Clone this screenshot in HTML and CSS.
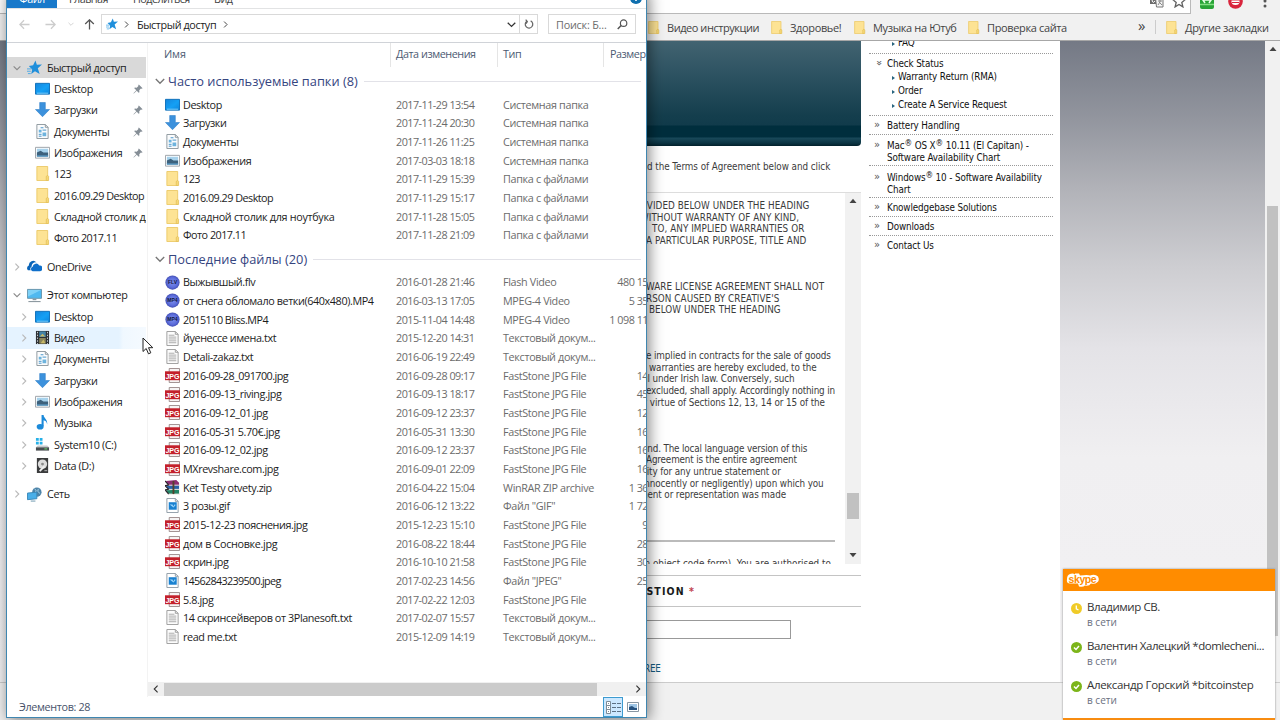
FILE: index.html
```html
<!DOCTYPE html>
<html lang="ru">
<head>
<meta charset="utf-8">
<title>Быстрый доступ</title>
<link rel="stylesheet" href="styles.css">
</head>
<body>
<svg class="defs" aria-hidden="true">
<linearGradient id="gd" x2="1" y2="1"><stop offset="0" stop-color="#1585dc"/><stop offset=".55" stop-color="#14a0f5"/><stop offset="1" stop-color="#0e86dd"/></linearGradient>
<radialGradient id="gm"><stop offset="0" stop-color="#7f90ec"/><stop offset=".7" stop-color="#5b6cdb"/><stop offset="1" stop-color="#4450b4"/></radialGradient>
<symbol id="desk" viewBox="0 0 16 16"><path d="M.500 2.500h15v11.500H.500z" fill="url(#gd)" stroke="#0b6db8"/><path d="M2 13h12" stroke="#7fd0fb"/></symbol>
<symbol id="down" viewBox="0 0 16 16"><path d="M5 .500h6v7.500H15.500L8 15.700.500 8H5z" fill="#3c91dc" stroke="#2f7fc8" stroke-width=".6"/></symbol>
<symbol id="doc" viewBox="0 0 16 16"><path d="M2 .500h9l3 3v12H2z" fill="#fbfcfd" stroke="#8b959c"/><path d="M11 .500v3h3" fill="none" stroke="#8b959c"/><path d="M4 6h3v3H4zM8 9h4v4H8z" fill="#6db3dd"/><path d="M6 4h3M8 6.500h4M4 11h3M4 13h3" stroke="#3d8fc7"/></symbol>
<symbol id="pic" viewBox="0 0 16 16"><path d="M.500 2.500h15v11.500H.500z" fill="#fff" stroke="#9ba1a6"/><path d="M2 4h12v8.500H2z" fill="#a7d2ec"/><path d="M2 8l4-2 3 2h5v4H2z" fill="#3d617c"/><path d="M2 11h12v1.500H2z" fill="#5794bd"/></symbol>
<symbol id="fold" viewBox="0 0 16 16"><path d="M2 .500h11.500v15H2z" fill="#fde394" stroke="#ecca6a"/><path d="M12 15.500v-4.500l1.500-1 1 1v4.500z" fill="#f6d878" stroke="#e2be55" stroke-width=".8"/></symbol>
<symbol id="star" viewBox="0 0 16 16"><path d="M9 .500l1.500 4.500 5.500-.300-4.500 4L13.500 15l-5-3-4 3 1-5L2 6.500l4.500-.800z" fill="#1f8fdb"/><path d="M0 9.500h5M0 12h4M1 14.500h3" stroke="#4aa9e6"/></symbol>
<symbol id="cloud" viewBox="0 0 16 16"><path d="M1 12a3 3 0 0 1 1-5 4.500 4.500 0 0 1 8-3.300A4 4 0 0 0 5 8 3 3 0 0 0 4 12z" fill="#0a64b8"/><path d="M6 13a2.500 2.500 0 0 1 0-4.800A3.700 3.700 0 0 1 13 7a3 3 0 0 1 1 6z" fill="#0f6fca"/></symbol>
<symbol id="pc" viewBox="0 0 16 16"><path d="M.500 1.500h15v9.500H.500z" fill="#50b9f0" stroke="#6894ab"/><path d="M1 2h14L1 9z" fill="#7fd1f7"/><path d="M6 11.500h4V13H6z" fill="#8b9aa3"/><path d="M1.500 14.500h13" stroke="#7a8890"/></symbol>
<symbol id="vid" viewBox="0 0 16 16"><path d="M1 1h14v14H1z" fill="#2d3135"/><path d="M4.500 1.500h7v6h-7z" fill="#4383a7"/><path d="M4.500 8.500h7v6h-7z" fill="#8a855c"/><path d="M2.700 2v13M13.300 2v13" stroke="#dbe0e3" stroke-dasharray="1.500 1.500"/><path d="M5 7l3-3 3 3M6 14l3-4 2 4" fill="#c6b867"/></symbol>
<symbol id="mus" viewBox="0 0 16 16"><ellipse cx="5.500" cy="12.500" rx="3.700" ry="3" fill="#1b8ada"/><path d="M7 0h2.200c0 3.500 4.500 4.500 3.800 10-.700-3.500-2-4-3.800-4.500V12H7z" fill="#1b8ada"/></symbol>
<symbol id="drv" viewBox="0 0 16 16"><path d="M1 1h3v3H1zM5 1h3v3H5zM1 5h3v3H1zM5 5h3v3H5z" fill="#25b0e8"/><path d="M3 9h10l2 2H1z" fill="#c4c8ca"/><path d="M1 11h14v3.500H1z" fill="#484d50"/><path d="M10 12.700h3" stroke="#6be36b"/></symbol>
<symbol id="hdd" viewBox="0 0 16 16"><path d="M2 0h12v16H2z" fill="#3b3c3d"/><circle cx="8" cy="6.500" r="5" fill="#dcdcdc"/><circle cx="8" cy="6.500" r="1.500" fill="#8a8a8a"/><path d="M5 14l5-5" stroke="#f0f0f0" stroke-width="2"/><path d="M10 13.500h3" stroke="#bbb"/></symbol>
<symbol id="net" viewBox="0 0 16 16"><circle cx="10.500" cy="5.500" r="5" fill="#4d83a8"/><path d="M8 2q3 1 1 4M12 2q-2 3 2 5" stroke="#a9d3ea" fill="none"/><path d="M.500 6.500l10-1v7l-10 1z" fill="#49aee8" stroke="#3a88b8"/><path d="M4 15h5" stroke="#6894ab"/></symbol>
<symbol id="txt" viewBox="0 0 16 16"><path d="M2 .500h9l3 3v12H2z" fill="#fcfcfc" stroke="#9b9b9b"/><path d="M11 .500v3h3" fill="none" stroke="#9b9b9b"/><path d="M4 4.500h6M4 6.500h8M4 8.500h8M4 10.500h8M4 12.500h8" stroke="#a8a8a8"/></symbol>
<symbol id="jpg" viewBox="0 0 16 16"><path d="M4.500.500h11v15h-11z" fill="#f6f3f3" stroke="#9b8a8a"/><path d="M0 3.500h16v9.500H0z" fill="#c3202a"/><text x="8" y="11.200" text-anchor="middle" class="ic jt">JPG</text></symbol>
<symbol id="img" viewBox="0 0 16 16"><path d="M2 .500h9l3 3v12H2z" fill="#fff" stroke="#8e9ba5"/><path d="M11 .500v3h3" fill="none" stroke="#8e9ba5"/><path d="M4 4.500h8.500v8H4z" fill="#1a81d0"/><path d="M5 7h3l1 2 1-2h1v1L9 10z" fill="#9ad6fb"/></symbol>
<symbol id="zip" viewBox="0 0 16 16"><path d="M1 1l11-1 3 3v3H4z" fill="#8e2c72"/><path d="M1 6l14-.500V10H4z" fill="#2862a8"/><path d="M1 11l14-.500V15H4z" fill="#228565"/><path d="M0 1l4 4.500L0 6l4 4-4 .500L4 15" fill="none" stroke="#27232b" stroke-width="1.300"/><path d="M4 5.500h11M4 10h11M4 15h12" stroke="#e8e4de"/><path d="M8 1h2v14H8z" fill="#55412d"/></symbol>
<symbol id="flv" viewBox="0 0 16 16"><circle cx="8" cy="8" r="7.600" fill="url(#gm)"/><text x="8" y="10" text-anchor="middle" class="ic mt">FLV</text></symbol>
<symbol id="mp4" viewBox="0 0 16 16"><circle cx="8" cy="8" r="7.600" fill="url(#gm)"/><text x="8" y="10" text-anchor="middle" class="ic mt">MP4</text></symbol>
<symbol id="pin" viewBox="0 0 12 12"><path d="M7 .500l4.500 4.500-1 .700-1-.200-2 2 .200 2.300-.900.700L4.500 8 1 11.500.500 11 4 7.500 1.500 5.200l.700-.900 2.300.200 2-2L6.300 1.500z" fill="#858e96"/></symbol>
<symbol id="cr" viewBox="0 0 10 10"><path d="M3 .800L7.200 5 3 9.200" fill="none" stroke="currentColor" class="chev"/></symbol>
<symbol id="cd" viewBox="0 0 10 10"><path d="M.800 3L5 7.200 9.200 3" fill="none" stroke="currentColor" class="chev"/></symbol>
<symbol id="arr" viewBox="0 0 12 12"><path d="M11.500 6H1M5.500 1.300L.900 6l4.600 4.700" fill="none" stroke="currentColor" class="chev"/></symbol>
<symbol id="tri" viewBox="0 0 8 6"><path d="M4 .800L7.500 5h-7z" fill="#444"/></symbol>
</svg>

<div class="browser">
  <div class="toolbar">
    <div class="omni">
      <svg width="14" height="14" viewBox="0 0 14 14"><path d="M0 0h8v10H0z" fill="#6b6b6b"/><path d="M5.500 4h7.500v9H6.500z" fill="#f4f4f4" stroke="#777"/><path d="M2 5h4M8 7h4M10 6v2l-2 3M9 8l3 3" stroke="#888" fill="none"/><path d="M2 7q0-3 3-2M5 7q-2 3-3 0" stroke="#fff" fill="none"/></svg>
      <svg width="14" height="14" viewBox="0 0 14 14"><path d="M7 1l1.700 4.200 4.600.300-3.500 3 1.100 4.400L7 10.500l-3.900 2.400 1.100-4.400-3.500-3 4.600-.300z" fill="none" stroke="#606060" stroke-width="1.300"/></svg>
    </div>
    <svg class="ext1" width="14" height="16" viewBox="0 0 14 16"><rect width="14" height="16" rx="2" fill="#28a336"/><path d="M3 2v5h8V2M3 7l2 3M11 7l-2 3" stroke="#e8ffe8" stroke-width="1.500" fill="none"/><path d="M0 11.500h14" stroke="#80e080" stroke-width="1.500"/></svg>
    <svg class="ext2" width="15" height="15" viewBox="0 0 15 15"><circle cx="7.500" cy="7.500" r="7.300" fill="#d9243c"/><path d="M3.500 6.500h8v1q0 3.500-4 3.500t-4-3.500z" fill="#fff"/><path d="M4 8.500h7" stroke="#d9243c"/></svg>
    <svg class="ext3" width="4" height="14" viewBox="0 0 4 14"><circle cx="2" cy="2" r="1.500" fill="#555"/><circle cx="2" cy="7" r="1.500" fill="#555"/><circle cx="2" cy="12" r="1.500" fill="#555"/></svg>
  </div>
  <div class="bookmarks">
    <span class="bm b1"><svg><use href="#fold"/></svg>Видео инструкции</span>
    <span class="bm b2"><svg><use href="#fold"/></svg>Здоровье!</span>
    <span class="bm b3"><svg><use href="#fold"/></svg>Музыка на Ютуб</span>
    <span class="bm b4"><svg><use href="#fold"/></svg>Проверка сайта</span>
    <span class="more">»</span>
    <span class="bm b5"><svg><use href="#fold"/></svg>Другие закладки</span>
  </div>
  <div class="page">
    <div class="gutter"></div>
    <div class="site">
      <div class="article">
        <div class="hero"></div>
        <p class="intro">d the Terms of Agreement below and click</p>
        <div class="licence">
          <div class="ltext">
            <p class="s1 caps">OVIDED BELOW UNDER THE HEADING</p><p class="s1 caps">WITHOUT WARRANTY OF ANY KIND,</p><p class="s4 caps">TO, ANY IMPLIED WARRANTIES OR</p><p class="s2 caps">A PARTICULAR PURPOSE, TITLE AND</p><p></p><p></p><p></p>
            <p class="s3 caps">WARE LICENSE AGREEMENT SHALL NOT</p><p class="s2 caps">RSON CAUSED BY CREATIVE'S</p><p class="s5 caps">BELOW UNDER THE HEADING</p><p></p><p></p><p></p>
            <p class="s2">e implied in contracts for the sale of goods</p><p class="s5">warranties are hereby excluded, to the</p><p class="s6">ul under Irish law. Conversely, such</p><p class="s2 tight">excluded, shall apply. Accordingly nothing in</p><p class="s6">y virtue of Sections 12, 13, 14 or 15 of the</p><p></p><p></p><p></p>
            <p class="s8 tight">and. The local language version of this</p><p class="s2 tight">Agreement is the entire agreement</p><p class="s8">ility for any untrue statement or</p><p class="s7">innocently or negligently) upon which you</p><p class="s9">ment or representation was made</p><p></p><p></p><p></p><p class="rule"></p><p></p>
            <p class="s6 form">in object code form). You are authorised to</p>
          </div>
          <div class="sb"><svg><use href="#tri"/></svg><i></i><svg class="flip"><use href="#tri"/></svg></div>
        </div>
        <div class="question">QUESTION <b>*</b></div>
        <div class="answer"></div>
        <a class="agree">AGREE</a>
      </div>
      <div class="menu">
        <div class="mi faq"><span class="sub">FAQ</span></div>
        <div class="mi check"><span class="top"><em class="dn">»</em>Check Status</span><span class="sub">Warranty Return (RMA)</span><span class="sub o">Order</span><span class="sub o">Create A Service Request</span></div>
        <div class="mi h19"><span class="top"><em>»</em>Battery Handling</span></div>
        <div class="mi h31"><span class="top"><em>»</em><span>Mac<sup>®</sup> OS X<sup>®</sup> 10.11 (El Capitan) -<br>Software Availability Chart</span></span></div>
        <div class="mi h32"><span class="top"><em>»</em><span>Windows<sup>®</sup> 10 - Software Availability<br>Chart</span></span></div>
        <div class="mi h19"><span class="top"><em>»</em>Knowledgebase Solutions</span></div>
        <div class="mi h19"><span class="top"><em>»</em>Downloads</span></div>
        <div class="mi h19 last"><span class="top"><em>»</em>Contact Us</span></div>
      </div>
    </div>
    <div class="gutter wide"></div>
    <div class="psb"><svg><use href="#tri"/></svg><i></i></div>
  </div>
  <div class="footer"></div>
</div>

<div class="skype">
  <div class="shead"><svg width="34" height="16" viewBox="0 0 34 16"><path d="M4 1q3-1 5 .500V.500h4l1 2q8-1 10 0 5-2 8 1 2 4-1 6-2 2-6 1-2 3-6 2-2 2-6 1l-1-3H5Q0 11 1 6q0-4 3-5z" fill="#fff"/><text x="2.500" y="9.500" class="sk">skype</text></svg></div>
  <div class="sbody">
    <div class="ct"><svg viewBox="0 0 11 11"><circle cx="5.500" cy="5.500" r="5.500" fill="#f0cb27"/><path d="M5.300 2.500v3.300l2.200 1.200" stroke="#fff" stroke-width="1.300" fill="none"/></svg><div><p>Владимир СВ.</p><small>в сети</small></div></div>
    <div class="ct"><svg viewBox="0 0 11 11"><circle cx="5.500" cy="5.500" r="5.500" fill="#7cb51a"/><path d="M3 5.500l2 2 3-3.500" stroke="#fff" stroke-width="1.500" fill="none"/></svg><div><p class="t2c">Валентин Халецкий *domlecheni...</p><small>в сети</small></div></div>
    <div class="ct"><svg viewBox="0 0 11 11"><circle cx="5.500" cy="5.500" r="5.500" fill="#7cb51a"/><path d="M3 5.500l2 2 3-3.500" stroke="#fff" stroke-width="1.500" fill="none"/></svg><div><p class="t3">Александр Горский *bitcoinstep</p><small>в сети</small></div></div>
  </div>
</div>

<div class="win">
  <div class="tabs"><span class="file">Файл</span><span class="tb t1">Главная</span><span class="tb t2">Поделиться</span><span class="tb t4">Вид</span><svg class="help" viewBox="0 0 12 12"><circle cx="6" cy="6" r="6" fill="#0f6fae"/><path d="M6 5v4" stroke="#fff" stroke-width="1.600"/></svg></div>
  <div class="nav">
    <svg class="a1"><use href="#arr"/></svg><svg class="a2"><use href="#arr"/></svg><svg class="a3"><use href="#cd"/></svg><svg class="a4"><use href="#arr"/></svg>
    <div class="addr"><svg class="st"><use href="#star"/></svg><svg class="c"><use href="#cr"/></svg><span>Быстрый доступ</span><svg class="c"><use href="#cr"/></svg><svg class="drop"><use href="#cd"/></svg><div class="ref"><svg viewBox="0 0 12 12"><path d="M8 2.300a4.500 4.500 0 1 1-4.500.300M2 .700l2 2.300-1.500 2.500" fill="none" stroke="#666" stroke-width="1.500"/></svg></div></div>
    <div class="search"><span>Поиск: Б...</span><svg viewBox="0 0 12 12"><circle cx="7.200" cy="4.500" r="3.500" fill="none" stroke="#555" stroke-width="1.300"/><path d="M4.500 7L.800 11" stroke="#555" stroke-width="1.600"/></svg></div>
  </div>
  <div class="body">
    <div class="tree">
      <div class="n root sel"><svg class="e d"><use href="#cd"/></svg><svg class="i"><use href="#star"/></svg><span>Быстрый доступ</span></div>
      <div class="n"><svg class="e"></svg><svg class="i"><use href="#desk"/></svg><span>Desktop</span><svg class="p"><use href="#pin"/></svg></div>
      <div class="n"><svg class="e"></svg><svg class="i"><use href="#down"/></svg><span>Загрузки</span><svg class="p"><use href="#pin"/></svg></div>
      <div class="n"><svg class="e"></svg><svg class="i"><use href="#doc"/></svg><span>Документы</span><svg class="p"><use href="#pin"/></svg></div>
      <div class="n"><svg class="e"></svg><svg class="i"><use href="#pic"/></svg><span>Изображения</span><svg class="p"><use href="#pin"/></svg></div>
      <div class="n"><svg class="e"></svg><svg class="i"><use href="#fold"/></svg><span>123</span></div>
      <div class="n"><svg class="e"></svg><svg class="i"><use href="#fold"/></svg><span class="num">2016.09.29 Desktop</span></div>
      <div class="n"><svg class="e"></svg><svg class="i"><use href="#fold"/></svg><span>Складной столик для ноутбука</span></div>
      <div class="n"><svg class="e"></svg><svg class="i"><use href="#fold"/></svg><span class="num">Фото 2017.11</span></div>
      <div class="n root gap"><svg class="e"><use href="#cr"/></svg><svg class="i"><use href="#cloud"/></svg><span>OneDrive</span></div>
      <div class="n root gap"><svg class="e d"><use href="#cd"/></svg><svg class="i"><use href="#pc"/></svg><span>Этот компьютер</span></div>
      <div class="n"><svg class="e"><use href="#cr"/></svg><svg class="i"><use href="#desk"/></svg><span>Desktop</span></div>
      <div class="n hov"><svg class="e"><use href="#cr"/></svg><svg class="i"><use href="#vid"/></svg><span>Видео</span></div>
      <div class="n"><svg class="e"><use href="#cr"/></svg><svg class="i"><use href="#doc"/></svg><span>Документы</span></div>
      <div class="n"><svg class="e"><use href="#cr"/></svg><svg class="i"><use href="#down"/></svg><span>Загрузки</span></div>
      <div class="n"><svg class="e"><use href="#cr"/></svg><svg class="i"><use href="#pic"/></svg><span>Изображения</span></div>
      <div class="n"><svg class="e"><use href="#cr"/></svg><svg class="i"><use href="#mus"/></svg><span>Музыка</span></div>
      <div class="n"><svg class="e"><use href="#cr"/></svg><svg class="i"><use href="#drv"/></svg><span>System10 (C:)</span></div>
      <div class="n"><svg class="e"><use href="#cr"/></svg><svg class="i"><use href="#hdd"/></svg><span>Data (D:)</span></div>
      <div class="n root gap"><svg class="e"><use href="#cr"/></svg><svg class="i"><use href="#net"/></svg><span>Сеть</span></div>
    </div>
    <div class="list">
      <div class="head"><span>Имя</span><span>Дата изменения</span><span>Тип</span><span>Размер</span></div>
      <div class="grp"><svg><use href="#cd"/></svg><span>Часто используемые папки (8)</span><i></i></div>
      <div class="r"><svg><use href="#desk"/></svg><b>Desktop</b><span>2017-11-29 13:54</span><span>Системная папка</span></div>
      <div class="r"><svg><use href="#down"/></svg><b>Загрузки</b><span>2017-11-24 20:30</span><span>Системная папка</span></div>
      <div class="r"><svg><use href="#doc"/></svg><b>Документы</b><span>2017-11-26 11:25</span><span>Системная папка</span></div>
      <div class="r"><svg><use href="#pic"/></svg><b>Изображения</b><span>2017-03-03 18:18</span><span>Системная папка</span></div>
      <div class="r"><svg><use href="#fold"/></svg><b class="num">123</b><span>2017-11-29 15:39</span><span>Папка с файлами</span></div>
      <div class="r"><svg><use href="#fold"/></svg><b class="num">2016.09.29 Desktop</b><span>2017-11-29 15:17</span><span>Папка с файлами</span></div>
      <div class="r"><svg><use href="#fold"/></svg><b class="loose">Складной столик для ноутбука</b><span>2017-11-28 15:05</span><span>Папка с файлами</span></div>
      <div class="r"><svg><use href="#fold"/></svg><b class="num">Фото 2017.11</b><span>2017-11-28 21:09</span><span>Папка с файлами</span></div>
      <div class="grp"><svg><use href="#cd"/></svg><span>Последние файлы (20)</span><i></i></div>
      <div class="r"><svg><use href="#flv"/></svg><b>Выжывшый.flv</b><span>2016-01-28 21:46</span><span>Flash Video</span><u>480 15</u></div>
      <div class="r"><svg><use href="#mp4"/></svg><b>от снега обломало ветки(640x480).MP4</b><span>2016-03-13 17:05</span><span>MPEG-4 Video</span><u>5 35</u></div>
      <div class="r"><svg><use href="#mp4"/></svg><b class="num">2015110 Bliss.MP4</b><span>2015-11-04 14:48</span><span>MPEG-4 Video</span><u>1 098 11</u></div>
      <div class="r"><svg><use href="#txt"/></svg><b>йуенессе имена.txt</b><span>2015-12-20 14:31</span><span>Текстовый докум...</span></div>
      <div class="r"><svg><use href="#txt"/></svg><b>Detali-zakaz.txt</b><span>2016-06-19 22:49</span><span>Текстовый докум...</span></div>
      <div class="r"><svg><use href="#jpg"/></svg><b class="num">2016-09-28_091700.jpg</b><span>2016-09-28 09:17</span><span>FastStone JPG File</span><u>14</u></div>
      <div class="r"><svg><use href="#jpg"/></svg><b>2016-09-13_riving.jpg</b><span>2016-09-13 18:17</span><span>FastStone JPG File</span><u>45</u></div>
      <div class="r"><svg><use href="#jpg"/></svg><b>2016-09-12_01.jpg</b><span>2016-09-12 23:37</span><span>FastStone JPG File</span><u>12</u></div>
      <div class="r"><svg><use href="#jpg"/></svg><b>2016-05-31 5.70€.jpg</b><span>2016-05-31 13:30</span><span>FastStone JPG File</span><u>16</u></div>
      <div class="r"><svg><use href="#jpg"/></svg><b>2016-09-12_02.jpg</b><span>2016-09-12 23:37</span><span>FastStone JPG File</span><u>16</u></div>
      <div class="r"><svg><use href="#jpg"/></svg><b>MXrevshare.com.jpg</b><span>2016-09-01 22:09</span><span>FastStone JPG File</span><u>16</u></div>
      <div class="r"><svg><use href="#zip"/></svg><b>Ket Testy otvety.zip</b><span>2016-04-22 15:04</span><span>WinRAR ZIP archive</span><u>1 36</u></div>
      <div class="r"><svg><use href="#img"/></svg><b>3 розы.gif</b><span>2016-06-12 13:22</span><span>Файл "GIF"</span><u>1 72</u></div>
      <div class="r"><svg><use href="#jpg"/></svg><b>2015-12-23 пояснения.jpg</b><span>2015-12-23 15:10</span><span>FastStone JPG File</span><u>9</u></div>
      <div class="r"><svg><use href="#jpg"/></svg><b class="loose">дом в Сосновке.jpg</b><span>2016-08-22 18:44</span><span>FastStone JPG File</span><u>28</u></div>
      <div class="r"><svg><use href="#jpg"/></svg><b>скрин.jpg</b><span>2016-10-10 21:58</span><span>FastStone JPG File</span><u>30</u></div>
      <div class="r"><svg><use href="#img"/></svg><b class="num2">14562843239500.jpeg</b><span>2017-02-23 14:56</span><span>Файл "JPEG"</span><u>25</u></div>
      <div class="r"><svg><use href="#jpg"/></svg><b>5.8.jpg</b><span>2017-02-22 12:03</span><span>FastStone JPG File</span></div>
      <div class="r"><svg><use href="#txt"/></svg><b>14 скринсейверов от 3Planesoft.txt</b><span>2017-02-07 15:57</span><span>Текстовый докум...</span></div>
      <div class="r"><svg><use href="#txt"/></svg><b>read me.txt</b><span>2015-12-09 14:19</span><span>Текстовый докум...</span></div>
      <div class="hsb"><svg class="l"><use href="#cr"/></svg><i></i><svg><use href="#cr"/></svg></div>
    </div>
  </div>
  <div class="status"><span>Элементов: 28</span>
    <div class="v on"><svg width="15" height="13" viewBox="0 0 15 13"><path d="M.500.500h4v12h-4z" fill="#fff" stroke="#7d8c98"/><path d="M1 4.500h3M1 8.500h3M2 2.500h1M2 6.500h1M2 10.500h1" stroke="#7d8c98"/><path d="M6 2.500h4M11 2.500h4M6 6.500h4M11 6.500h4M6 10.500h4M11 10.500h4" stroke="#5c7185"/></svg></div>
    <div class="v"><svg width="12" height="10" viewBox="0 0 12 10"><path d="M.500.500h11v9H.500z" fill="#fff" stroke="#8997a3"/><path d="M2 2h8v6H2z" fill="#9fc6e6"/><path d="M2 5l3-1 3 2h2v2H2z" fill="#27527f"/></svg></div>
  </div>
</div>
<svg class="cursor" width="12" height="18" viewBox="0 0 12 18"><path d="M1 1v13.500l3.200-3 2.300 5.300 2.300-1-2.300-5.100h4.300z" fill="#fff" stroke="#222"/></svg>
</body>
</html>
```
FILE: styles.css
```css
* { box-sizing: border-box; }
html, body { margin: 0; width: 1280px; height: 720px; overflow: hidden; }
body { background: #f1f1f1; font-family: "Open Sans", "Noto Sans", sans-serif; font-size: 10.8px; color: #1c1c1c; position: relative; }
p { margin: 0; }
svg { flex: none; display: block; }
.defs { position: absolute; width: 0; height: 0; }
.chev { stroke-width: 1.4px; }
.ic { font-family: "Liberation Sans", sans-serif; font-weight: bold; letter-spacing: 0; }
.jt { font-size: 7.6px; fill: #fff; }
.mt { font-size: 5.4px; fill: #10163f; }

/* browser behind */
.browser { width: 1280px; height: 720px; display: flex; flex-direction: column; }
.toolbar { height: 14px; display: flex; align-items: flex-start; background: #f1f1f1; }
.omni { width: 1191px; height: 14px; background: #fff; border: solid #b9b9b9; border-width: 0 1px 1px 0; display: flex; justify-content: flex-end; padding-right: 4px; gap: 8px; }
.omni svg { margin-top: -6px; }
.ext1 { margin: -7px 0 0 9px; }
.ext2 { margin: -6px 0 0 14px; }
.ext3 { margin: -6px 0 0 20px; }
.bookmarks { height: 27px; border-bottom: 1px solid #a7a7a7; background: #f1f1f1; display: flex; align-items: center; padding-left: 647px; color: #444; }
.bm { display: flex; align-items: center; gap: 7px; white-space: nowrap; font-size: 11px; letter-spacing: -.36px; }
.bm svg { width: 13px; height: 13px; }
.b1 { width: 123px; letter-spacing: -.45px; } .b2 { width: 83px; } .b3 { width: 114px; } .b4 { width: 171px; }
.more { width: 17px; font-size: 15px; line-height: 12px; margin-top: -4px; }
.b5 { border-left: 1px solid #ccc; height: 14px; padding-left: 9px; }
.page { height: 641px; display: flex; background: #fff; }
.gutter { width: 7px; background: linear-gradient(#747985, #92959e 12%, #b1b2b8 23%, #cdcdd1 35%, #e4e3e7 48%, #f0eff1 65%, #f2f1f3); }
.wide { width: 205px; }
.site { width: 1053px; display: flex; padding-left: 633px; }
.psb { width: 15px; background: #f1f1f1; display: flex; flex-direction: column; align-items: center; padding-top: 5px; }
.psb svg, .sb svg { width: 8px; height: 6px; }
.psb i { width: 11px; height: 430px; background: #c1c1c1; margin-top: 154px; }
.footer { flex: 1; border-top: 1px solid #ccc; background: #f1f1f1; }

.article { width: 221px; font-family: "DejaVu Sans Condensed", "DejaVu Sans", sans-serif; font-stretch: condensed; font-size: 9.8px; color: #3c3c3c; letter-spacing: -.1px; white-space: nowrap; }
.hero { height: 105px; border-radius: 0 0 4px 4px; background: linear-gradient(#426371, #2b5160 35%, #143e4d 75px, #113b4b 84px, #002e3d 85px, #002e3d 96px, #19495a 97px, #0b3443 102px, #02202b); }
.intro { padding-left: 7px; line-height: 12px; margin-top: 15px; letter-spacing: -.05px; }
.licence { height: 372px; margin-top: 19px; border-top: 1px solid #ddd; display: flex; overflow: hidden; }
.ltext { width: 205px; padding-top: 7px; overflow: hidden; }
.ltext p { height: 11.57px; line-height: 11.57px; }
.ltext .rule { height: 2px; background: #bbb; margin: 5px 10px 4.570px 0; }
.ltext .form { letter-spacing: .02px; }
.ltext .caps { letter-spacing: .06px; }
.ltext .tight { letter-spacing: -.15px; }
.s1 { padding-left: 0; } .s2 { padding-left: 6px; } .s3 { padding-left: 6px; } .s4 { padding-left: 12px; } .s5 { padding-left: 9px; } .s6 { padding-left: 2px; } .s7 { padding-left: 2px; } .s8 { padding-left: 2px; } .s9 { margin-left: -1px; }
.sb { width: 16px; background: #f1f1f1; display: flex; flex-direction: column; align-items: center; padding: 5px 0; }
.sb i { width: 12px; height: 26px; background: #c1c1c1; margin-top: 289px; }
.flip { transform: scaleY(-1); margin-top: 33px; }
.question { margin-top: 11px; height: 32px; border: solid #c4c4c4; border-width: 1px 0; font-size: 10.5px; font-weight: bold; letter-spacing: 1.1px; color: #1a1a1a; line-height: 31px; text-indent: -19px; }
.question b { color: #c0404a; }
.answer { margin-top: 13px; width: 151px; height: 19px; border: 1px solid #999; border-left: 0; }
.agree { display: block; margin-top: 24px; line-height: 12px; color: #155b80; text-indent: -8px; letter-spacing: -.3px; }

.menu { margin-left: 8px; width: 184px; font-family: "DejaVu Sans Condensed", "DejaVu Sans", sans-serif; font-stretch: condensed; font-size: 9.8px; color: #111; letter-spacing: -.13px; white-space: nowrap; line-height: 12px; }
.mi { border-bottom: 1px dotted #999; display: flex; flex-direction: column; }
.faq { height: 13px; overflow: hidden; margin-top: 0; }
.faq .sub { margin-top: -5px; }
.top { display: flex; }
.top em { width: 18px; padding-left: 5px; font-style: normal; font-size: 11px; line-height: 10px; color: #555; }
.top .dn { transform: rotate(90deg); transform-origin: 9px 6px; }
.sub { padding-left: 29px; display: block; position: relative; height: 14px; line-height: 14px; }
.sub::before { content: ""; position: absolute; left: 23px; top: 6px; border: solid transparent; border-width: 2.5px 0 2.5px 3px; border-left-color: #28647e; }
.check { height: 62px; padding-top: 4px; }
.check .sub { margin-top: 0; }
.h19 { height: 19px; padding-top: 4px; }
.h31 { height: 31px; padding-top: 5px; }
.h32 { height: 32px; padding-top: 6px; }
.h32 .top { line-height: 11.5px; }
sup { font-size: 8.5px; line-height: 0; vertical-align: 3px; }
.last { border: 0; }

/* messenger panel */
.skype { position: absolute; left: 1063px; top: 569px; width: 212px; height: 151px; background: #fff; border-bottom: 2px solid #f88c10; box-shadow: 0 0 2px #888; }
.shead { height: 22px; background: #ff8c00; padding: 4px 0 0 3px; }
.sk { font: bold 10.5px "Liberation Sans", sans-serif; letter-spacing: -.4px; fill: #ff8c00; }
.sbody { padding: 8px 0 0 8px; }
.ct { height: 39.1px; display: flex; gap: 5px; white-space: nowrap; }
.ct svg { width: 11px; height: 11px; margin-top: 4px; }
.ct p { font-size: 11.5px; line-height: 16px; color: #333; letter-spacing: -.4px; }
.ct .t2c { letter-spacing: -.48px; }
.ct .t3 { letter-spacing: -.35px; }
.ct small { font-size: 10px; line-height: 15px; color: #6a6f80; display: block; }

/* file manager window */
.win { position: absolute; left: 6px; top: -10px; width: 641px; height: 728px; background: #fff; border: 1px solid #3f86b0; box-shadow: 2px 2px 14px rgba(0,0,0,.5); display: flex; flex-direction: column; overflow: hidden; letter-spacing: -.4px; }
.tabs { height: 18px; border-bottom: 1px solid #e2e3e4; display: flex; font-size: 10.8px; color: #444; line-height: 15px; flex: none; letter-spacing: -.55px; }
.file { width: 50px; height: 17px; background: #1979ca; color: #fff; text-align: center; }
.t1 { padding-left: 12px; width: 76px; } .t2 { width: 81px; } .t4 { width: 416px; }
.help { width: 12px; height: 12px; margin: 1px 0 0 0; }
.nav { height: 34px; border-bottom: 1px solid #d0d3d8; display: flex; align-items: center; padding-bottom: 3px; flex: none; color: #222; }
.nav > svg { width: 11px; height: 11px; }
.a1 { margin-left: 12px; color: #ccc; }
.a2 { margin-left: 15px; transform: scaleX(-1); color: #ccc; }
.nav > .a3 { width: 6px; height: 6px; margin-left: 12px; color: #ccc; }
.a4 { margin-left: 10px; transform: rotate(90deg); color: #555; }
.addr { margin-left: 6px; width: 437px; height: 20px; border: 1px solid #d9d9d9; display: flex; align-items: center; }
.addr .st { width: 12px; height: 12px; margin-left: 4px; }
.addr .c { width: 7px; height: 7px; color: #444; margin-left: 5px; }
.addr span { margin-left: 7px; }
.addr span + .c { margin-left: 6px; }
.addr .drop { width: 9px; height: 9px; margin-left: auto; margin-right: 3px; color: #333; }
.ref { width: 18px; height: 18px; border-left: 1px solid #d9d9d9; display: flex; align-items: center; justify-content: center; }
.ref svg { width: 10px; height: 10px; }
.search { margin-left: 10px; width: 88px; height: 20px; border: 1px solid #d9d9d9; display: flex; align-items: center; color: #6d6d6d; padding: 0 7px; justify-content: space-between; letter-spacing: -.2px; }
.search svg { width: 11px; height: 11px; }
.body { flex: 1; display: flex; min-height: 0; }
.tree { width: 139px; padding-top: 14px; overflow: hidden; flex: none; }
.n { height: 21.34px; display: flex; align-items: center; padding-left: 13px; white-space: nowrap; }
.n span { margin-top: -1px; }
.root { padding-left: 6px; }
.gap { margin-top: 7.2px; }
.n .e { width: 8px; height: 8px; color: #b9b9b9; }
.n .d { color: #8a8a8a; }
.n .i { width: 15px; height: 15px; margin: -1px 4px 0 7px; }
.root .i { margin: 0 5px 0 6px; }
.n .p { width: 10px; height: 10px; margin: 0 3px 0 auto; }
.sel { background: #d9d9d9; }
.hov { background: linear-gradient(90deg, #e5f3ff 112px, #f0f8ff 116px, #f5faff); }
.list { width: 500px; padding-left: 2px; flex: none; display: flex; flex-direction: column; border-left: 1px solid #f3f3f3; margin-left: 1px; }
.head { display: flex; height: 24px; line-height: 22px; color: #4c5a72; letter-spacing: -.45px; flex: none; }
.head span { border-right: 1px solid #e5e5e5; padding-left: 5px; }
.head span:nth-child(1) { width: 241px; padding-left: 14px; letter-spacing: -.1px; } .head span:nth-child(2) { width: 107px; } .head span:nth-child(3) { width: 106px; } .head span:nth-child(4) { border: 0; padding-left: 6px; }
.grp { height: 28.5px; display: flex; align-items: center; color: #35457f; font-size: 12.8px; letter-spacing: .02px; padding-left: 5px; white-space: nowrap; flex: none; }
.grp svg { width: 10px; height: 10px; color: #777; margin-right: 3px; }
.grp span { margin-top: -1px; }
.grp i { height: 1px; background: #e2e2e8; flex: 1; margin: 0 6px 0 6px; }
.r { height: 18.67px; display: flex; align-items: center; padding-left: 15px; white-space: nowrap; flex: none; }
.r svg { width: 15px; height: 15px; margin: -1px 3px 0 0; }
.r b, .r span, .r u { margin-top: -1.4px; flex: none; }
.r b { font-weight: normal; width: 213px; }
.num { letter-spacing: -.52px; }
.num2 { letter-spacing: -.68px; }
.loose { letter-spacing: -.32px; }
.r span { width: 107px; color: #6b6b6b; letter-spacing: -.52px; }
.r span + span { width: 99px; letter-spacing: -.34px; }
.r u { text-decoration: none; color: #6b6b6b; width: 46px; text-align: right; letter-spacing: -.5px; }
.hsb { margin: auto 0 1px -2px; height: 14px; background: #f0f0f0; display: flex; align-items: center; color: #333; flex: none; }
.hsb svg { width: 8px; height: 8px; }
.hsb .l { transform: scaleX(-1); margin: 0 4px 0 4px; }
.hsb i { width: 433px; height: 13px; background: #cbcbcb; margin-right: 37px; }
.status { height: 20px; display: flex; align-items: center; padding: 0 3px 0 12px; color: #47536b; flex: none; letter-spacing: -.35px; }
.status span { margin: -1px auto 0 0; }
.v { width: 20px; height: 20px; display: flex; align-items: center; justify-content: center; }
.on { background: #cce8ff; border: 1px solid #3d9bd0; }
.cursor { position: absolute; left: 142px; top: 337px; }
```
